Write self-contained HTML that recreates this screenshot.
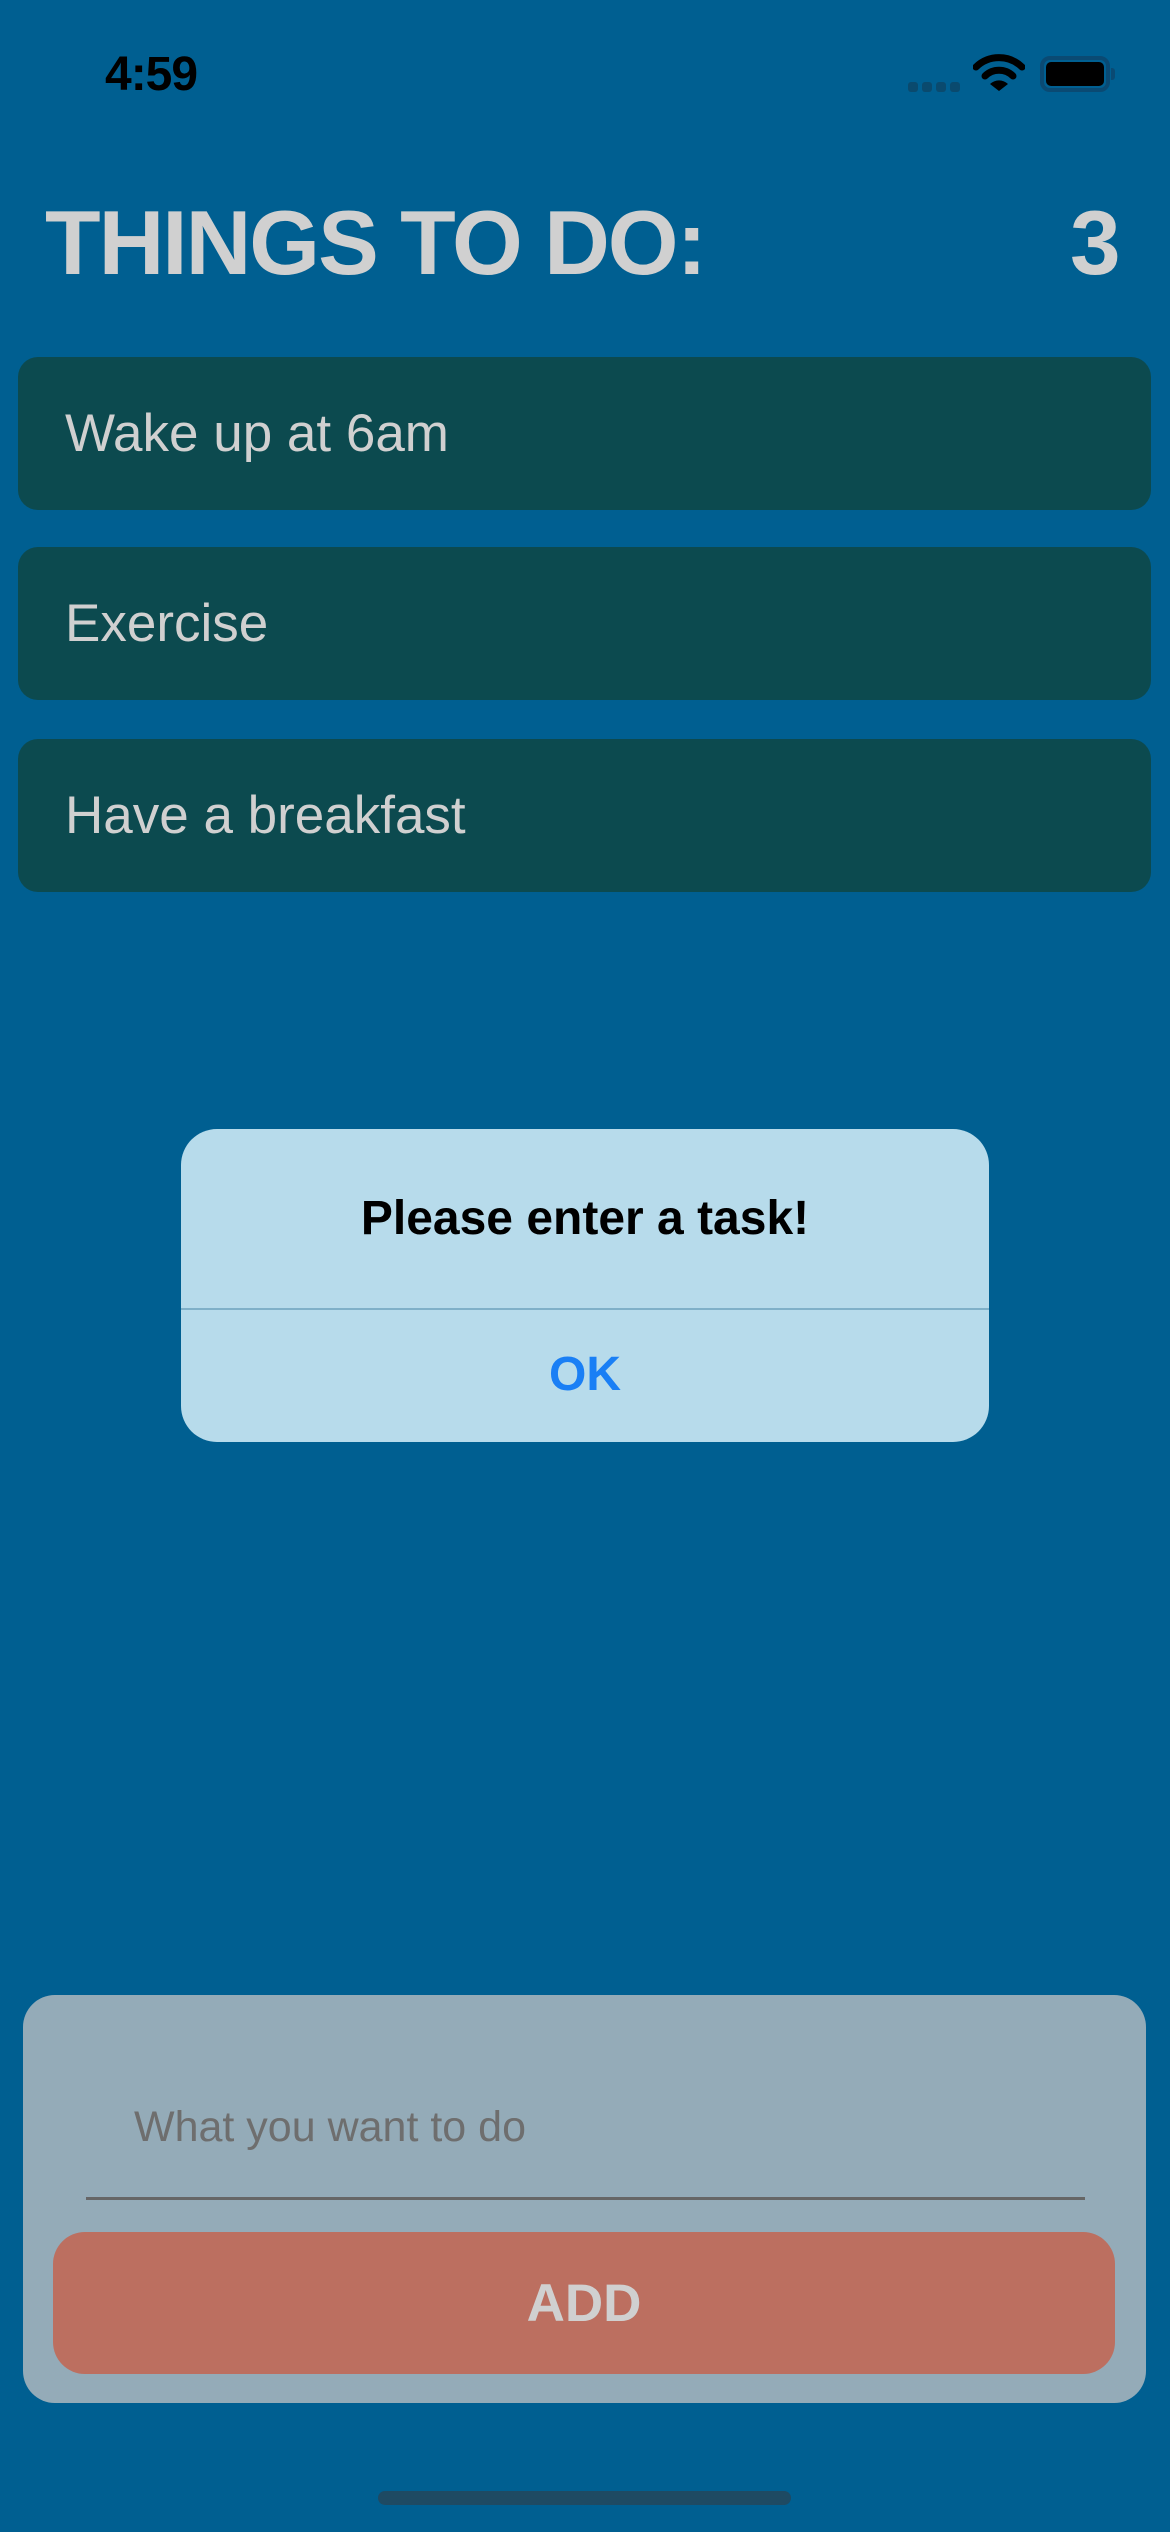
<!DOCTYPE html>
<html><head><meta charset="utf-8"><style>
*{margin:0;padding:0;box-sizing:border-box}
body{width:1170px;height:2532px;background:#005f91;position:relative;overflow:hidden;font-family:"Liberation Sans",sans-serif}
.a{position:absolute}
.card{position:absolute;left:18px;width:1133px;height:153px;background:#0c4a4f;border-radius:20px;color:#d0d0d0;font-size:53px;padding-left:47px;display:flex;align-items:center}
.dot{position:absolute;top:82px;width:10px;height:10px;border-radius:3px;background:#0a4a6e}
</style></head><body>
<div class="a" style="left:105px;top:47px;font-size:48px;font-weight:bold;color:#000;letter-spacing:-1px">4:59</div>
<div class="dot" style="left:908px"></div><div class="dot" style="left:922px"></div><div class="dot" style="left:936px"></div><div class="dot" style="left:950px"></div>
<svg class="a" style="left:973px;top:54px" width="52" height="38" viewBox="0 0 52 38">
<path d="M3 13 A33 33 0 0 1 49 13" stroke="#000" stroke-width="7" fill="none" stroke-linecap="round"/>
<path d="M12 22 A20 20 0 0 1 40 22" stroke="#000" stroke-width="7" fill="none" stroke-linecap="round"/>
<path d="M26 37 L17 30 A13 13 0 0 1 35 30 Z" fill="#000"/>
</svg>
<div class="a" style="left:1040px;top:56px;width:70px;height:36px;border:4px solid #0a4a73;border-radius:10px"></div>
<div class="a" style="left:1046px;top:62px;width:58px;height:24px;background:#000;border-radius:5px"></div>
<div class="a" style="left:1111px;top:68px;width:4px;height:12px;background:#0a4a73;border-radius:0 3px 3px 0"></div>

<div class="a" style="left:45px;top:194px;font-size:91px;font-weight:bold;color:#d0d0d0;letter-spacing:-2px;line-height:100px">THINGS TO DO:</div>
<div class="a" style="left:1070px;top:194px;font-size:91px;font-weight:bold;color:#d0d0d0;line-height:100px">3</div>

<div class="card" style="top:357px">Wake up at 6am</div>
<div class="card" style="top:547px">Exercise</div>
<div class="card" style="top:739px">Have a breakfast</div>

<div class="a" style="left:181px;top:1129px;width:808px;height:313px;background:#b7dbeb;border-radius:36px;overflow:hidden">
<div class="a" style="left:0;top:62px;width:808px;text-align:center;font-size:48px;font-weight:bold;color:#000">Please enter a task!</div>
<div class="a" style="left:0;top:179px;width:808px;height:2px;background:#7fb0c8"></div>
<div class="a" style="left:0;top:218px;width:808px;text-align:center;font-size:48px;font-weight:bold;color:#1a7ff5">OK</div>
</div>

<div class="a" style="left:23px;top:1995px;width:1123px;height:408px;background:#94abb8;border-radius:32px"></div>
<div class="a" style="left:134px;top:2103px;font-size:43px;color:#6e6e6e">What you want to do</div>
<div class="a" style="left:86px;top:2197px;width:999px;height:3px;background:#666"></div>
<div class="a" style="left:53px;top:2232px;width:1062px;height:142px;background:#bc6f60;border-radius:32px;display:flex;align-items:center;justify-content:center;font-size:53px;font-weight:bold;color:#d0d0d0">ADD</div>
<div class="a" style="left:378px;top:2491px;width:413px;height:14px;background:#1e4a63;border-radius:7px"></div>
</body></html>
